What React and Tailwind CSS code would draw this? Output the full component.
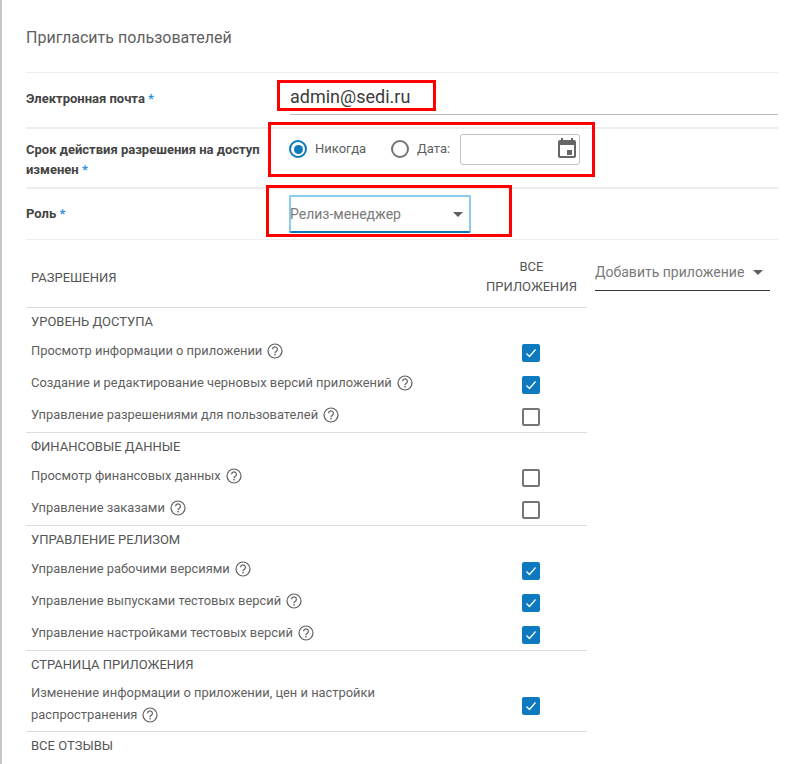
import React from 'react';

const font = { fontFamily: 'Roboto, sans-serif' };

const Help = () => (
  <svg className="ml-[5px] inline-block shrink-0 align-[-4px]" width="16" height="16" viewBox="0 0 16 16" fill="none">
    <circle cx="8" cy="8" r="7" stroke="#5f5f5f" strokeWidth="1.2" />
    <path d="M5.6 6.3a2.4 2.4 0 1 1 3.7 2c-.8.5-1.3.9-1.3 1.9" stroke="#5f5f5f" strokeWidth="1.2" />
    <rect x="7.3" y="11" width="1.4" height="1.4" fill="#5f5f5f" />
  </svg>
);

const Check = ({ on }) =>
  on ? (
    <span className="mt-[1px] flex h-[18px] w-[18px] items-center justify-center rounded-[2px] bg-[#0d79bf]">
      <svg width="14" height="14" viewBox="0 0 14 14" fill="none">
        <path d="M2.5 7.5l3 3 6-7" stroke="#fff" strokeWidth="1.3" />
      </svg>
    </span>
  ) : (
    <span className="mt-[1px] h-[18px] w-[18px] rounded-[2px] border-2 border-[#757575]" />
  );

const Caret = () => (
  <span className="h-0 w-0 border-x-[5.5px] border-t-[5.5px] border-x-transparent border-t-[#5f5f5f]" />
);

const Req = () => <span className="text-[#2f8fdc]"> *</span>;

const sections = [
  {
    name: 'УРОВЕНЬ ДОСТУПА',
    rows: [
      ['Просмотр информации о приложении', true],
      ['Создание и редактирование черновых версий приложений', true],
      ['Управление разрешениями для пользователей', false],
    ],
  },
  {
    name: 'ФИНАНСОВЫЕ ДАННЫЕ',
    rows: [
      ['Просмотр финансовых данных', false],
      ['Управление заказами', false],
    ],
  },
  {
    name: 'УПРАВЛЕНИЕ РЕЛИЗОМ',
    rows: [
      ['Управление рабочими версиями', true],
      ['Управление выпусками тестовых версий', true],
      ['Управление настройками тестовых версий', true],
    ],
  },
  {
    name: 'СТРАНИЦА ПРИЛОЖЕНИЯ',
    rows: [['Изменение информации о приложении, цен и настройки распространения', true, true]],
  },
];

export default function App() {
  return (
    <div style={font} className="relative h-[764px] w-[803px] overflow-hidden bg-white text-[13px] text-[#5f5f5f]">
      <div className="absolute top-0 bottom-0 left-0 w-[2px] bg-[#c8c8c8]" />

      <div className="pl-[26px]">
        <div className="flex h-[72px] items-center pt-[3px] text-[16px] leading-[20px] text-[#616161]">Пригласить пользователей</div>

        {/* form */}
        <div className="w-[752px] border-t border-[#eeeeee]">
          <div className="flex h-[56px] items-start border-b-2 border-[#eeeeee]">
            <div className="mt-[17px] w-[264px] text-[13px] leading-[18px] font-bold text-[#444]">Электронная почта<Req /></div>
            <div className="h-[42px] w-[488px] border-b border-[#bdbdbd] pt-[12px] text-[18px] leading-[24px] text-[#3c3c3c]">admin@sedi.ru</div>
          </div>

          <div className="flex h-[60px] items-center border-b-2 border-[#eeeeee]">
            <div className="w-[263px] pt-[4px] text-[13px] leading-[20px] font-bold text-[#444]">
              Срок действия разрешения на доступ изменен<Req />
            </div>
            <div className="flex items-center pb-[18px]">
              <span className="flex h-[18px] w-[18px] items-center justify-center rounded-full border-2 border-[#0d79bf]">
                <span className="h-[9px] w-[9px] rounded-full bg-[#0d79bf]" />
              </span>
              <span className="ml-[8px] w-[76px] text-[13px]">Никогда</span>
              <span className="h-[18px] w-[18px] rounded-full border-2 border-[#757575]" />
              <span className="ml-[8px] w-[43px] text-[13px]">Дата:</span>
              <div className="flex h-[31px] w-[120px] items-center justify-end rounded-[3px] border border-[#c4c4c4]">
                <svg width="24" height="24" viewBox="0 0 24 24" fill="#666">
                  <path d="M19 3h-1V1h-2v2H8V1H6v2H5c-1.1 0-2 .9-2 2v14c0 1.1.9 2 2 2h14c1.1 0 2-.9 2-2V5c0-1.1-.9-2-2-2zm0 16H5V8h14v11zM12 13h5v5h-5z" />
                </svg>
              </div>
            </div>
          </div>

          <div className="flex h-[51px] items-center border-b border-[#eeeeee]">
            <div className="w-[263px] text-[13px] font-bold text-[#444]">Роль<Req /></div>
            <div className="flex h-[38px] w-[182px] items-center justify-between rounded-[2px] border-2 border-[#86cdf0] border-b-[#0d79bf] pr-[6px] text-[14px] text-[#7a7a7a]">
              <span className="-ml-[1px]">Релиз-менеджер</span>
              <Caret />
            </div>
          </div>
        </div>

        {/* permissions */}
        <div className="mt-[8px] flex">
          <div className="w-[561px]">
            <div className="flex h-[60px] items-center border-b border-[#dddddd] text-[13px] text-[#555]">
              <div className="w-[450px] pl-[5px]">РАЗРЕШЕНИЯ</div>
              <div className="w-[111px] px-[8px] pb-[2px] text-center leading-[20px]">ВСЕ ПРИЛОЖЕНИЯ</div>
            </div>
            {sections.map((s) => (
              <div key={s.name} className="border-b border-[#dddddd]">
                <div className="flex h-[28px] items-center pl-[5px] text-[13px] text-[#555]">{s.name}</div>
                {s.rows.map(([label, on, tall]) => (
                  <div key={label} className={`flex items-center ${tall ? 'h-[52px]' : 'h-[32px]'}`}>
                    <div className="w-[496px] pr-[90px] pb-[2px] pl-[5px] text-[12.9px] leading-[22px]">
                      {label}
                      <Help />
                    </div>
                    <Check on={on} />
                  </div>
                ))}
              </div>
            ))}
            <div className="flex h-[27px] items-center pl-[5px] text-[13px] text-[#555]">ВСЕ ОТЗЫВЫ</div>
          </div>

          <div className="mt-[8px] ml-[8px] flex h-[35px] w-[175px] items-center justify-between border-b border-[#333] pr-[7px] pb-[2px] text-[14px] text-[#7a7a7a]">
            <span>Добавить приложение</span>
            <Caret />
          </div>
        </div>
      </div>

      {/* red annotation boxes on top of the screenshot */}
      <div className="absolute top-[80px] left-[277px] h-[31px] w-[159px] border-[3px] border-[#ff0000]" />
      <div className="absolute top-[122px] left-[268px] h-[55px] w-[327px] border-[3px] border-[#ff0000]" />
      <div className="absolute top-[185px] left-[266px] h-[52px] w-[246px] border-[3px] border-[#ff0000]" />
    </div>
  );
}
